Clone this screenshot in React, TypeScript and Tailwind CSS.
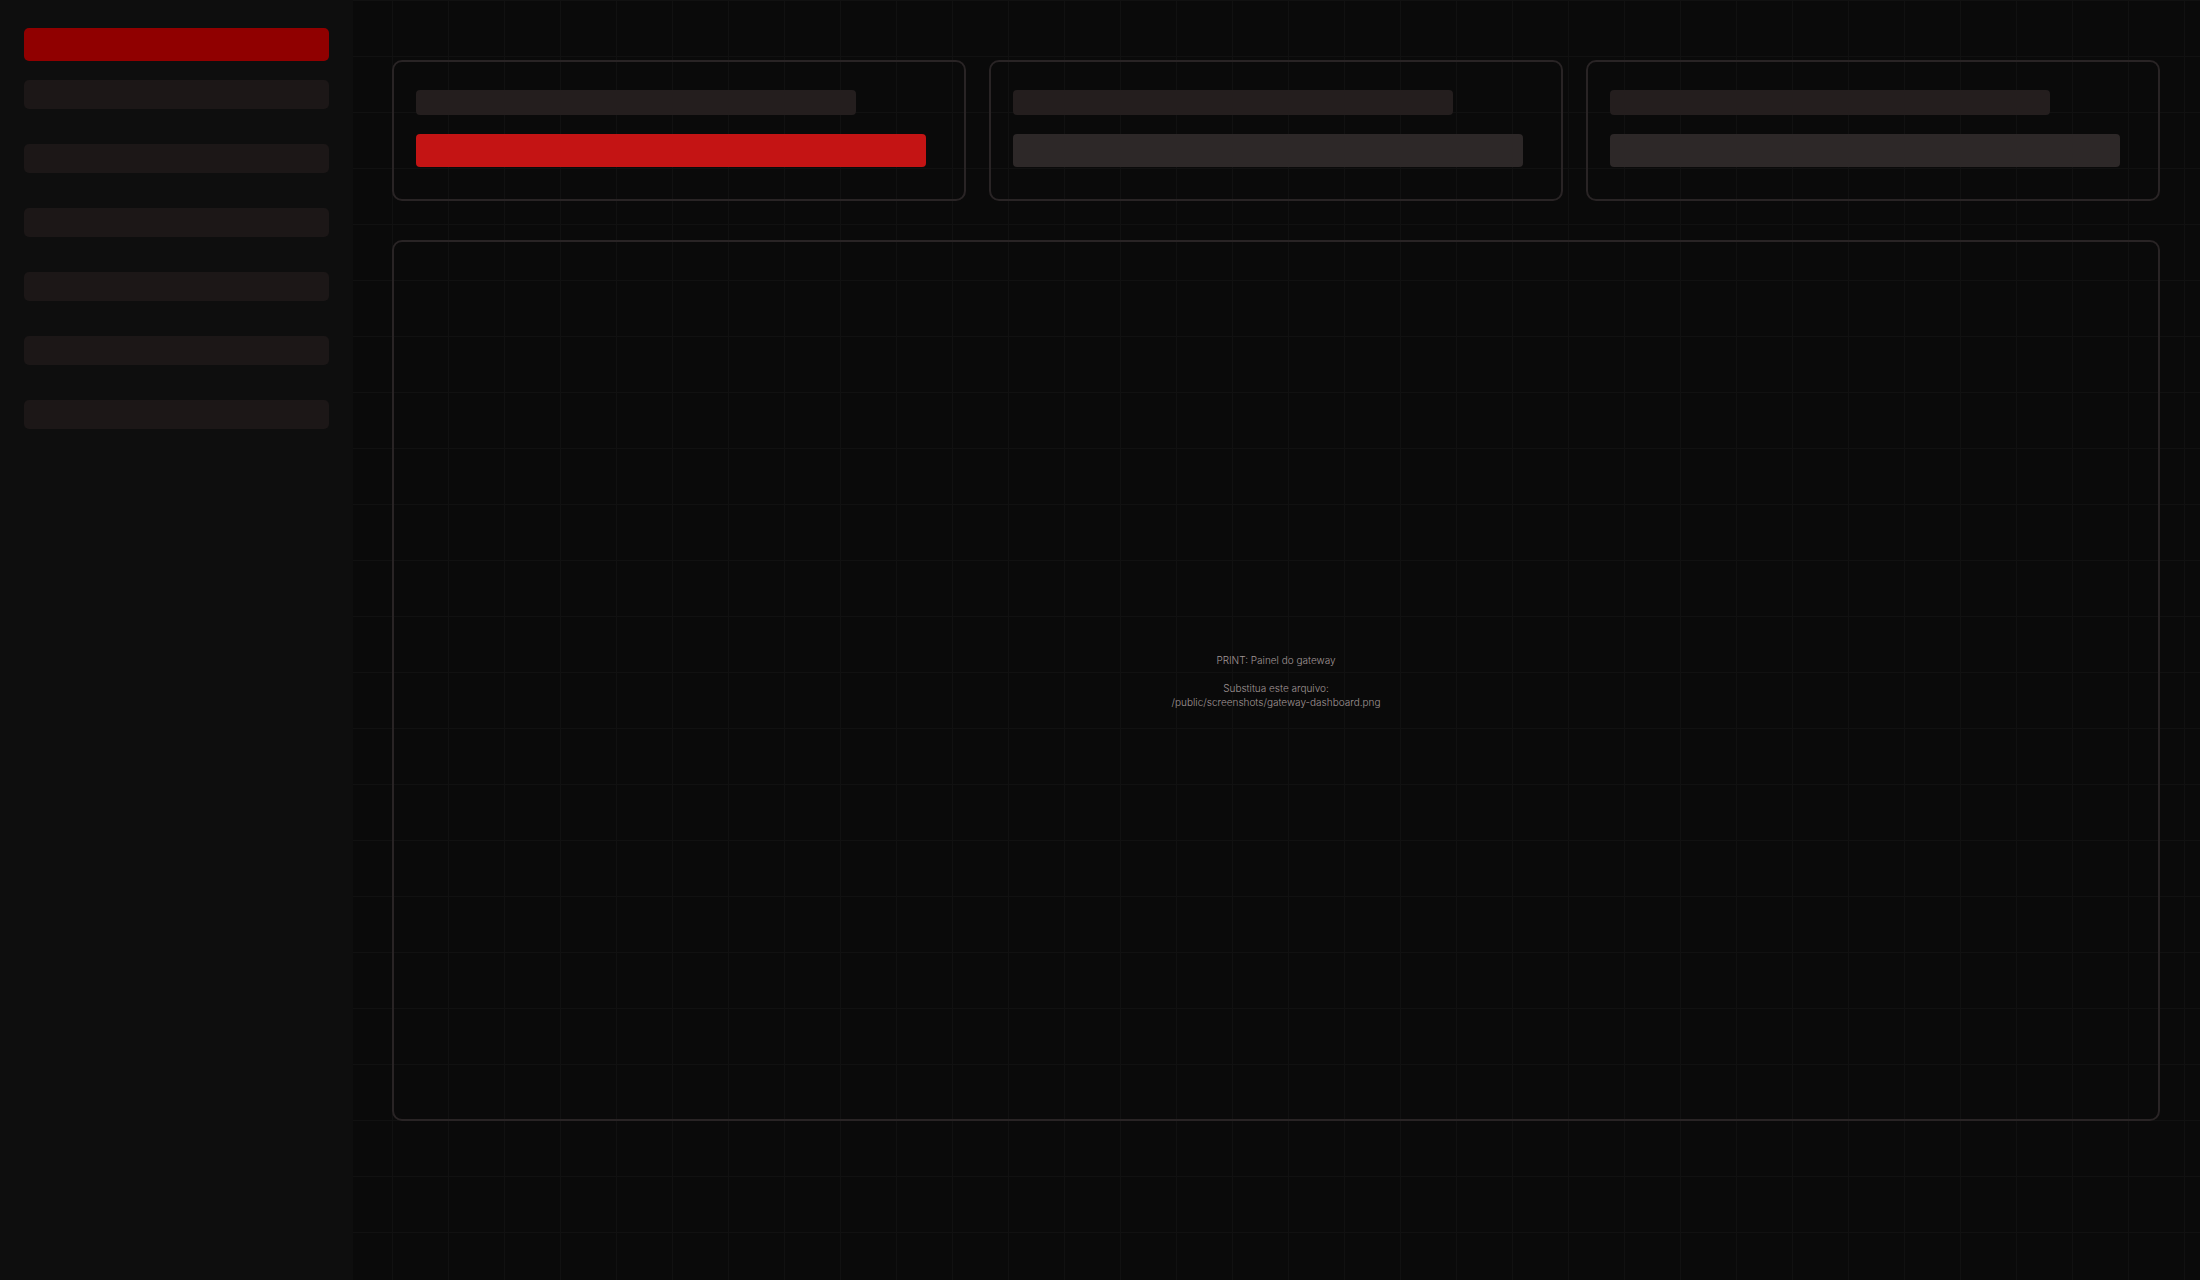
import React from 'react';
import clsx from 'clsx';

const NAV_ITEMS = 6;

const CARDS = [
  { id: 'primary', highlight: true },
  { id: 'secondary', highlight: false },
  { id: 'tertiary', highlight: false },
];

const Sidebar: React.FC = () => (
  <aside className="w-[353px] shrink-0 bg-[#0e0e0e] px-6 pt-7">
    <div className="h-[33px] rounded-[5px] bg-[#900000]" />
    <div className="mt-[19px] flex flex-col gap-[35px]">
      {Array.from({ length: NAV_ITEMS }, (_, i) => (
        <div key={i} className="h-[29px] rounded-[5px] bg-[#1c1717]" />
      ))}
    </div>
  </aside>
);

const StatCard: React.FC<{ highlight: boolean }> = ({ highlight }) => (
  <div className="rounded-[10px] border-2 border-[#292425] pt-7 pr-[38px] pb-8 pl-[22px]">
    <div className="mr-[70px] h-[25px] rounded bg-[#241e1e]" />
    <div className={clsx('mt-[19px] h-[33px] rounded', highlight ? 'bg-[#c41414]' : 'bg-[#2d2828]')} />
  </div>
);

export default function App() {
  return (
    <div className="flex min-h-screen bg-[#0a0a0a] bg-[linear-gradient(to_right,#111111_1px,transparent_1px),linear-gradient(to_bottom,#111111_1px,transparent_1px)] bg-[size:56px_56px]">
      <Sidebar />

      <main className="flex min-w-0 flex-1 flex-col gap-[39px] pt-[60px] pr-10 pb-[159px] pl-[39px]">
        {/* Summary cards */}
        <div className="grid grid-cols-3 gap-[23px]">
          {CARDS.map(card => (
            <StatCard key={card.id} highlight={card.highlight} />
          ))}
        </div>

        {/* Main panel */}
        <section className="flex flex-1 items-center justify-center rounded-[10px] border-2 border-[#292425] text-center font-['Inter',sans-serif] text-[10px] leading-[14px] font-light text-[#a09696]">
          <div>
            <p>PRINT: Painel do gateway</p>
            <p className="mt-[14px]">
              Substitua este arquivo:
              <br />
              /public/screenshots/gateway-dashboard.png
            </p>
          </div>
        </section>
      </main>
    </div>
  );
}
